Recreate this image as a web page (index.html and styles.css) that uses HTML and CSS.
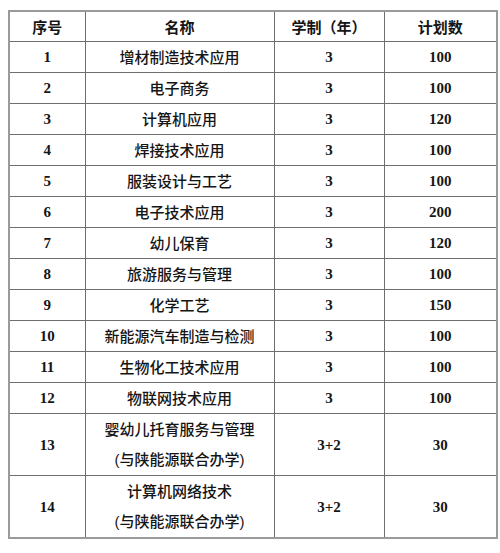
FILE: index.html
```html
<!DOCTYPE html>
<html lang="zh-CN">
<head>
<meta charset="utf-8">
<link rel="stylesheet" href="styles.css">
</head>
<body>
<table class="plan">
  <colgroup>
    <col class="c-no"><col class="c-name"><col class="c-years"><col class="c-count">
  </colgroup>
  <thead>
    <tr><th>序号</th><th>名称</th><th>学制（年）</th><th>计划数</th></tr>
  </thead>
  <tbody>
    <tr><td class="num">1</td><td class="name">增材制造技术应用</td><td class="num">3</td><td class="num">100</td></tr>
    <tr><td class="num">2</td><td class="name">电子商务</td><td class="num">3</td><td class="num">100</td></tr>
    <tr><td class="num">3</td><td class="name">计算机应用</td><td class="num">3</td><td class="num">120</td></tr>
    <tr><td class="num">4</td><td class="name">焊接技术应用</td><td class="num">3</td><td class="num">100</td></tr>
    <tr><td class="num">5</td><td class="name">服装设计与工艺</td><td class="num">3</td><td class="num">100</td></tr>
    <tr><td class="num">6</td><td class="name">电子技术应用</td><td class="num">3</td><td class="num">200</td></tr>
    <tr><td class="num">7</td><td class="name">幼儿保育</td><td class="num">3</td><td class="num">120</td></tr>
    <tr><td class="num">8</td><td class="name">旅游服务与管理</td><td class="num">3</td><td class="num">100</td></tr>
    <tr><td class="num">9</td><td class="name">化学工艺</td><td class="num">3</td><td class="num">150</td></tr>
    <tr><td class="num">10</td><td class="name">新能源汽车制造与检测</td><td class="num">3</td><td class="num">100</td></tr>
    <tr><td class="num">11</td><td class="name">生物化工技术应用</td><td class="num">3</td><td class="num">100</td></tr>
    <tr><td class="num">12</td><td class="name">物联网技术应用</td><td class="num">3</td><td class="num">100</td></tr>
    <tr class="tall"><td class="num">13</td><td class="name">婴幼儿托育服务与管理<br><span class="paren">(</span>与陕能源联合办学<span class="paren">)</span></td><td class="num">3+2</td><td class="num">30</td></tr>
    <tr class="tall"><td class="num">14</td><td class="name">计算机网络技术<br><span class="paren">(</span>与陕能源联合办学<span class="paren">)</span></td><td class="num">3+2</td><td class="num">30</td></tr>
  </tbody>
</table>
</body>
</html>
```

FILE: styles.css
```css
html, body {
  background: #ffffff;
}
body {
  margin: 10px 0 0 8px;
  font-family: "Noto Sans CJK SC", "Noto Sans", sans-serif;
  color: #151515;
}
.plan {
  border-collapse: collapse;
  table-layout: fixed;
  width: 488px;
  border: 2px solid #9a9a9a;
}
.c-no { width: 76px; }
.c-name { width: 189px; }
.c-years { width: 110px; }
.c-count { width: 113px; }
.plan tr {
  height: 30.8px;
}
.plan tr.tall {
  height: 61.5px;
}
.plan th,
.plan td {
  border: 1px solid #6e6e6e;
  padding: 0;
  text-align: center;
  vertical-align: middle;
}
.plan th {
  font-size: 15px;
  font-weight: 700;
  line-height: 20px;
}
.plan td.name {
  font-size: 15px;
  font-weight: 500;
  line-height: 30px;
}
.plan td.num {
  font-family: "Liberation Serif", "Times New Roman", serif;
  font-weight: 700;
  font-size: 15px;
  line-height: 20px;
}
.paren {
  font-family: "Liberation Sans", Arial, sans-serif;
  font-weight: 400;
}
```
